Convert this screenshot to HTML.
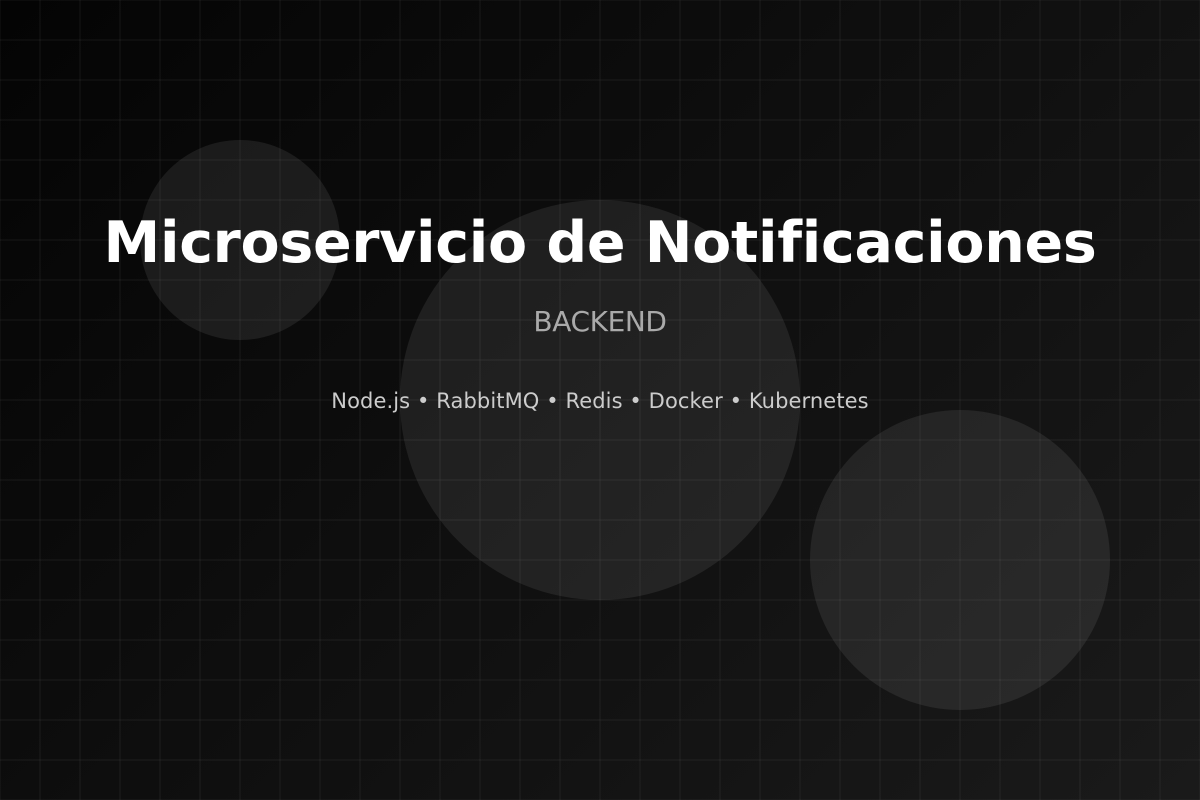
<!DOCTYPE html>
<html><head><meta charset="utf-8"><style>
html,body{margin:0;padding:0}
body{width:1200px;height:800px;overflow:hidden;position:relative;font-family:"DejaVu Sans","Liberation Sans",sans-serif;
background:linear-gradient(135deg,#040404 0%,#0f0f0f 50%,#1a1a1a 100%);}
.grid{position:absolute;inset:0;background-image:linear-gradient(rgba(255,255,255,0.03) 2px,transparent 2px),linear-gradient(90deg,rgba(255,255,255,0.03) 2px,transparent 2px);background-size:40px 40px;background-position:-1px -1px}
.c{position:absolute;border-radius:50%;background:rgba(255,255,255,0.08)}
h1{position:absolute;top:203px;left:0;width:1200px;text-align:center;margin:0;color:#fff;font-weight:bold;font-size:57px;line-height:80px;letter-spacing:-0.3px}
.sub{position:absolute;top:305px;left:0;width:1200px;text-align:center;color:#aaa;font-size:28px;line-height:34px;letter-spacing:-0.4px}
.tech{position:absolute;top:387px;left:0;width:1200px;text-align:center;color:#ccc;font-size:21px;line-height:28px;letter-spacing:0.1px}
</style></head><body>
<div class="grid"></div>
<div class="c" style="left:140px;top:140px;width:200px;height:200px"></div>
<div class="c" style="left:400px;top:200px;width:400px;height:400px"></div>
<div class="c" style="left:810px;top:410px;width:300px;height:300px"></div>
<h1>Microservicio de Notificaciones</h1>
<div class="sub">BACKEND</div>
<div class="tech">Node.js • RabbitMQ • Redis • Docker • Kubernetes</div>
</body></html>
